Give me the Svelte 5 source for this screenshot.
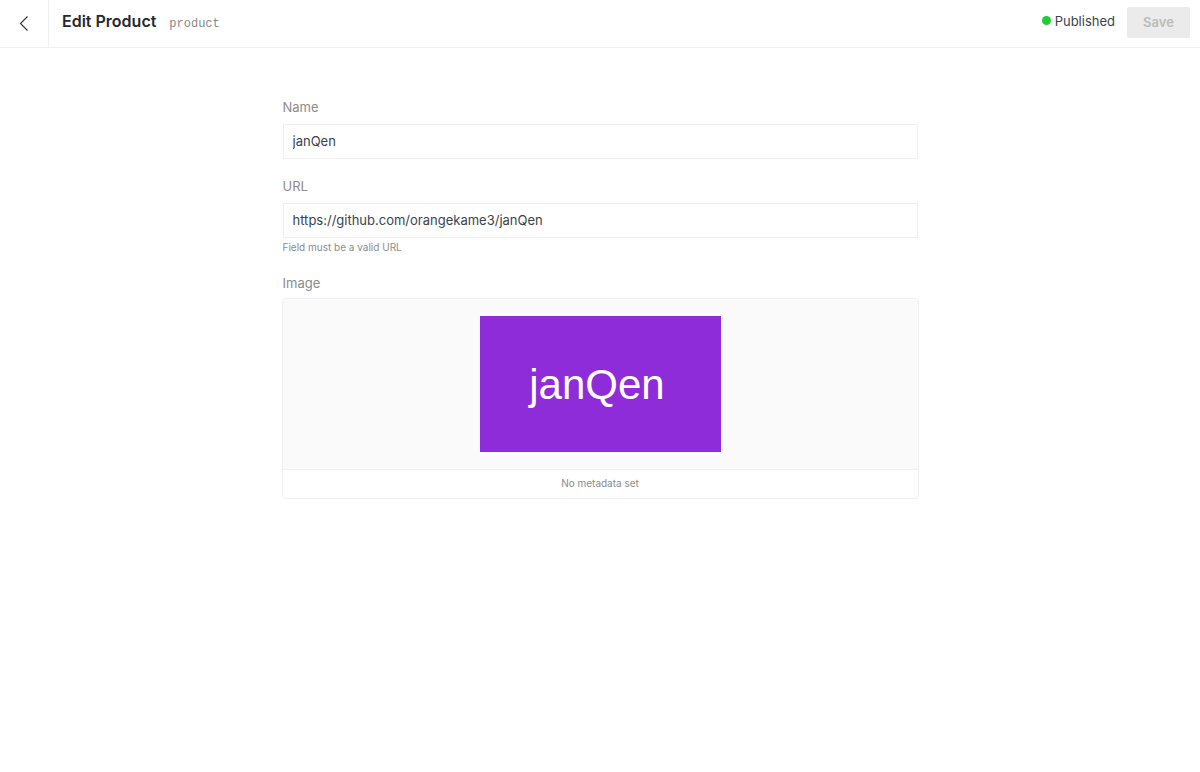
<script>
  let name = $state('janQen');
  let url = $state('https://github.com/orangekame3/janQen');
</script>

<header>
  <button class="back" type="button" aria-label="Back">
    <svg width="10" height="16" viewBox="0 0 10 16" fill="none" stroke="#343840" stroke-width="1.2"><path d="M8.5 0.5L1.5 7.5L8.5 14.5" /></svg>
  </button>
  <h1>Edit Product</h1>
  <code>product</code>
  <div class="status"><span class="dot"></span>Published</div>
  <button class="save" type="button" disabled>Save</button>
</header>

<main>
  <div class="field">
    <label for="name">Name</label>
    <input id="name" type="text" bind:value={name} />
  </div>
  <div class="field">
    <label for="url">URL</label>
    <input id="url" type="text" bind:value={url} aria-describedby="hint" />
    <p class="hint" id="hint">Field must be a valid URL</p>
  </div>
  <section class="field" aria-labelledby="image-label">
    <h2 id="image-label">Image</h2>
    <figure>
      <div class="preview"><div class="picture">janQen</div></div>
      <figcaption>No metadata set</figcaption>
    </figure>
  </section>
</main>

<style>
  :global(body) { background: #fff; color: #3b434c; font: 13px/20px Inter, sans-serif; }
  header { display: flex; align-items: center; height: 47px; padding-right: 10px; border-bottom: 1px solid #f0f0f0; }
  .back { display: flex; align-items: center; justify-content: center; align-self: stretch; width: 49px; padding: 0; border: 0; border-right: 1px solid #f0f0f0; background: none; }
  h1 { margin: 0 13px 6px; font-size: 16px; line-height: 20px; font-weight: 600; color: #25292e; }
  code { font: 12px/16px "Liberation Mono", monospace; color: #888; }
  .status { display: flex; align-items: center; gap: 4px; margin: 0 12px 6px auto; }
  .dot { width: 9px; height: 9px; border-radius: 50%; background: #2c3; }
  .save { width: 63px; height: 31px; margin-bottom: 2px; padding: 0 0 2px; border: 0; border-radius: 2px; background: #ebebeb; color: #bbb; font: 600 13px/20px Inter, sans-serif; }
  main { max-width: 635px; margin: 0 auto; padding: 49px 16px; }
  .field { margin-bottom: 17px; }
  label, h2 { display: block; margin: 0; font-size: 13px; line-height: 20px; font-weight: 400; color: #8c8c8c; }
  label { padding-bottom: 7px; }
  h2 { padding-bottom: 5px; }
  input { display: block; box-sizing: border-box; width: 100%; height: 35px; padding: 0 9px 2px; border: 1px solid #f0f0f0; color: #3b434c; background: #fff; font: 13px/20px Inter, sans-serif; }
  .hint { margin: 0; padding: 1px 0; font-size: 10px; line-height: 16px; color: #8c8c8c; }
  figure { margin: 0 -1px; border: 1px solid #f0f0f0; border-radius: 4px; overflow: hidden; }
  .preview { display: flex; justify-content: center; padding: 17px; background: #fafafa; border-bottom: 1px solid #f0f0f0; }
  .picture { display: flex; align-items: center; justify-content: center; box-sizing: border-box; width: 241px; height: 136px; padding: 2px 6px 0 0; background: #8f2cda; color: #fff; font: 42px/48px "Liberation Sans", sans-serif; }
  figcaption { padding: 5px 6px 7px; text-align: center; font-size: 10px; line-height: 16px; color: #8c8c8c; }
</style>
